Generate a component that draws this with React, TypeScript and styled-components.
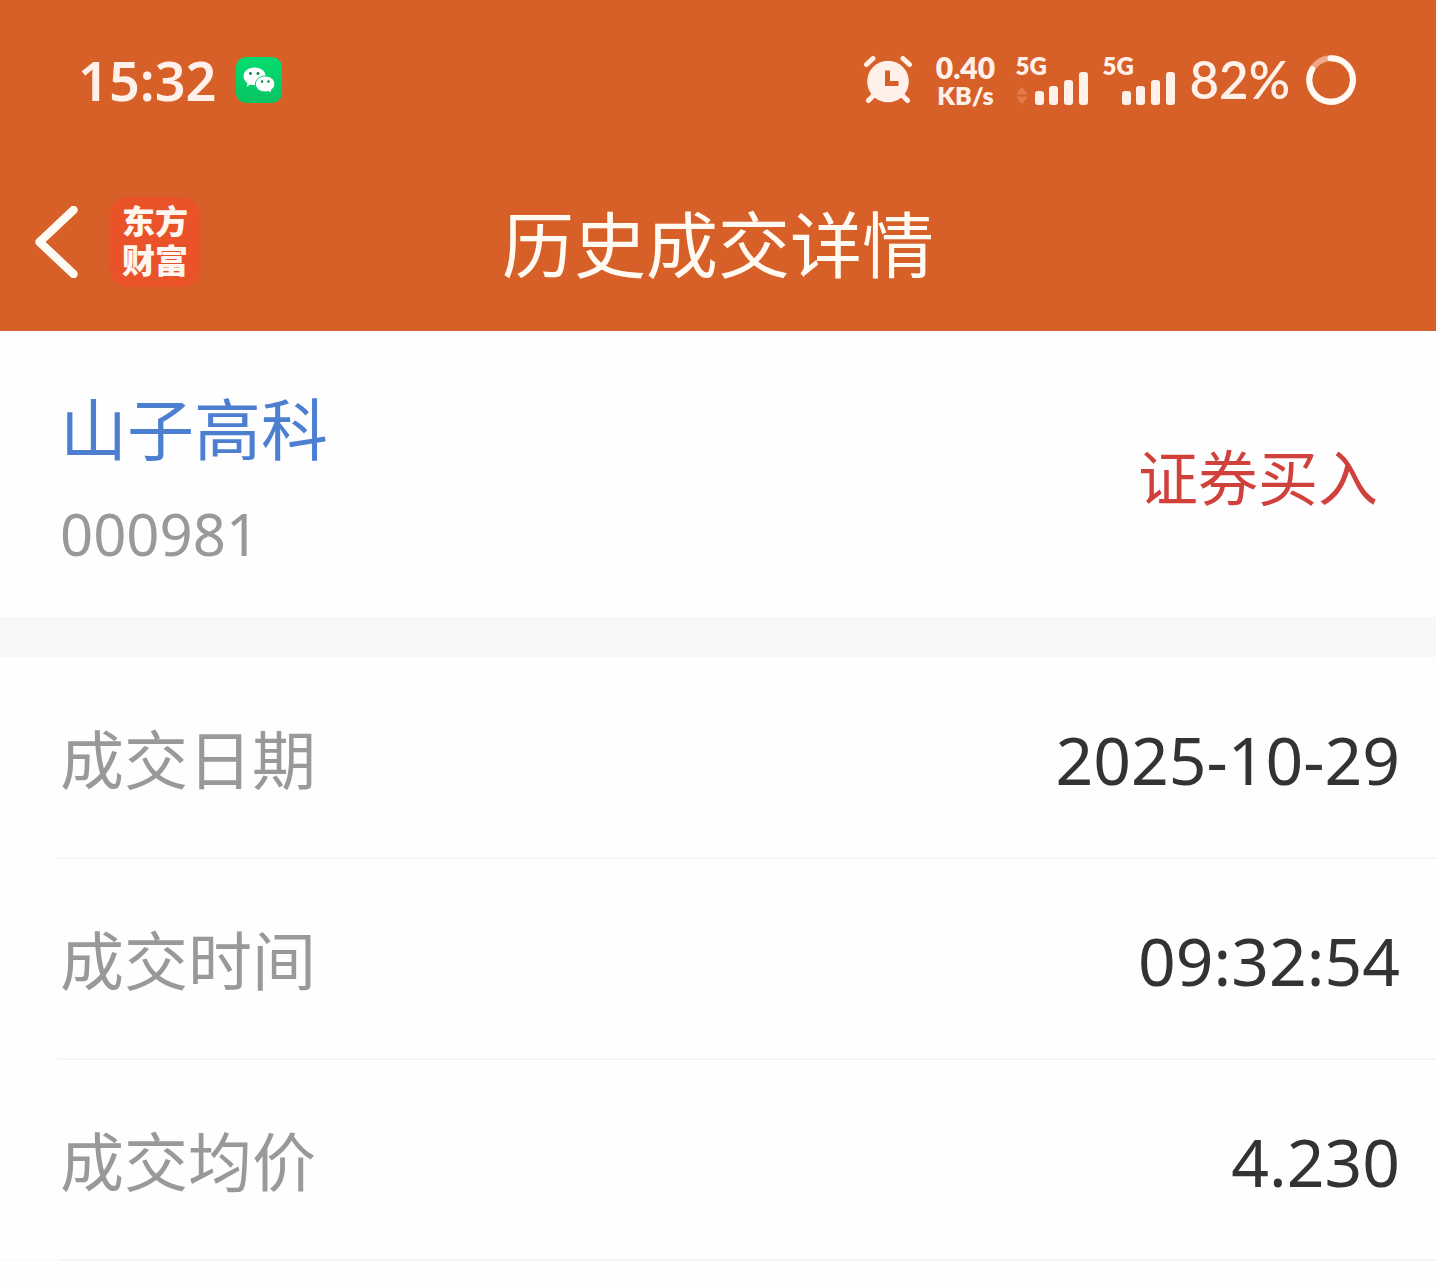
import React from "react";
import styled, { createGlobalStyle } from "styled-components";

const brand = "#d75f28";
const cream = "#fff1e9";
const numeric = `"Noto Sans", "Noto Sans CJK SC", sans-serif`;

const GlobalStyle = createGlobalStyle`
  * { box-sizing: border-box; }
  body {
    margin: 0;
    background: #fefefe;
    font-family: Lato, "Noto Sans CJK SC", sans-serif;
  }
`;

const Page = styled.div`
  display: flex;
  flex-direction: column;
  min-height: 100vh;
`;

const Header = styled.header`
  background: ${brand};
  color: ${cream};
`;

const StatusBar = styled.div`
  display: flex;
  align-items: center;
  justify-content: space-between;
  height: 160px;
  padding: 0 80px 0 78px;
`;

const StatusGroup = styled.div<{ $gap: number }>`
  display: flex;
  align-items: center;
  gap: ${(p) => p.$gap}px;
`;

const Clock = styled.time`
  font-family: ${numeric};
  font-size: 54px;
  line-height: 64px;
  font-weight: 600;
`;

const Speed = styled.div`
  display: flex;
  flex-direction: column;
  align-items: center;
  width: 64px;
  margin: 0 6px 0 8px;
  padding-top: 2px;
  font-weight: 800;
`;

const SpeedLine = styled.span<{ $size: number }>`
  font-size: ${(p) => p.$size}px;
  line-height: 28px;
`;

const Signal = styled.div`
  display: flex;
  flex-direction: column;
  width: 75px;
  padding-top: 1px;
  font-size: 24px;
  line-height: 20px;
  font-weight: 800;
`;

const SignalBars = styled.svg`
  display: block;
  width: 75px;
  height: 36px;
  margin-top: -7px;
`;

const Battery = styled.span`
  margin-right: 4px;
  font-size: 51px;
  line-height: 64px;
  font-weight: 600;
`;

const NavBar = styled.nav`
  display: grid;
  grid-template-columns: 1fr auto 1fr;
  align-items: center;
  height: 171px;
  padding: 0 34px 8px;
`;

const NavLeft = styled.div`
  display: flex;
  align-items: center;
  gap: 32px;
`;

const BackButton = styled.button`
  display: flex;
  padding: 0;
  border: 0;
  background: none;
  cursor: pointer;
`;

const AppLogo = styled.a`
  width: 90px;
  height: 90px;
  padding: 4px 12px;
  border-radius: 18px;
  background: #ea5329;
  color: #fff6f0;
  font-family: "Noto Sans CJK SC", sans-serif;
  font-size: 33px;
  line-height: 39px;
  font-weight: 900;
  text-decoration: none;
`;

const Title = styled.h1`
  margin: 0;
  padding-top: 4px;
  font-size: 72px;
  line-height: 88px;
  font-weight: 400;
  color: #fffaf2;
`;

const Summary = styled.section`
  display: flex;
  align-items: center;
  justify-content: space-between;
  padding: 46px 58px 34px 60px;
`;

const StockName = styled.a`
  display: block;
  font-size: 67px;
  line-height: 104px;
  color: #4c7fd0;
  text-decoration: none;
`;

const StockCode = styled.div`
  margin-top: 4px;
  font-family: ${numeric};
  font-size: 58px;
  line-height: 98px;
  color: #999;
`;

const TradeType = styled.div`
  padding-bottom: 4px;
  font-size: 60px;
  line-height: 88px;
  color: #d0413b;
`;

const Divider = styled.div`
  height: 40px;
  background: #f6f7f9;
`;

const Details = styled.dl`
  margin: 0;
  padding-top: 1px;
`;

const DetailRow = styled.div`
  display: flex;
  align-items: center;
  justify-content: space-between;
  height: 201px;
  padding: 4px 36px 0 60px;
  border-bottom: 2px solid;
  border-image: linear-gradient(to right, #fbfbfb 60px, #f5f5f5 60px) 1;
`;

const Label = styled.dt`
  font-size: 64px;
  line-height: 96px;
  color: #999;
`;

const Value = styled.dd`
  margin: 0;
  padding-bottom: 2px;
  font-family: ${numeric};
  font-size: 66px;
  line-height: 96px;
  color: #333;
`;

const rows = [
  { label: "成交日期", value: "2025-10-29" },
  { label: "成交时间", value: "09:32:54" },
  { label: "成交均价", value: "4.230" },
];

function WeChatIcon() {
  return (
    <svg width="46" height="46" viewBox="0 0 46 46" aria-hidden="true">
      <defs>
        <linearGradient id="wechat" x1="0" y1="0" x2="0" y2="1">
          <stop offset="0" stopColor="#04dc70" />
          <stop offset="1" stopColor="#08c463" />
        </linearGradient>
      </defs>
      <rect width="46" height="46" rx="10" fill="url(#wechat)" />
      <path d="M18.500 10.500C12.500 10.500 7.500 14.300 7.500 19.300c0 2.800 1.500 5.200 4 6.800l-1 3.600 4-2.200c1.300.4 2.600.6 4 .6 6.200 0 11.200-3.900 11.200-8.800s-5-8.800-11.200-8.800z" fill="#fff" />
      <path d="M29.200 19c-5.400 0-9.800 3.500-9.800 8s4.400 8 9.800 8c1.200 0 2.300-.2 3.400-.5l3.200 1.700-.8-2.900c2.300-1.500 3.800-3.700 3.800-6.300 0-4.500-4.300-8-9.600-8z" fill="#fff" stroke="#07cc67" strokeWidth="1" />
      <g fill="#087f43">
        <circle cx="14.500" cy="16.500" r="1.400" />
        <circle cx="22" cy="16.500" r="1.400" />
        <circle cx="26" cy="24.500" r="1.200" />
        <circle cx="32.500" cy="24.500" r="1.200" />
      </g>
    </svg>
  );
}

function AlarmIcon() {
  return (
    <svg width="50" height="50" viewBox="0 0 50 50" aria-label="闹钟" role="img">
      <g stroke={cream} strokeWidth="5" strokeLinecap="round">
        <path d="M3.500 9.500L10 3.500M40 3.500L46.500 9.500M11 40L5.500 45.500M39 40L44.500 45.500" />
      </g>
      <circle cx="25" cy="26.500" r="20.800" fill={cream} />
      <path d="M24.500 18V28.500H33" fill="none" stroke={brand} strokeWidth="5" strokeLinecap="square" />
    </svg>
  );
}

function SignalMeter({ arrows = false }: { arrows?: boolean }) {
  return (
    <Signal>
      <span>5G</span>
      <SignalBars viewBox="0 0 75 36" aria-hidden="true">
        {arrows && <path d="M1 25.500L7 17.500L13 25.500ZM1 27.500L7 35.500L13 27.500Z" fill="#e5794a" />}
        <g fill={cream}>
          <rect x="20" y="22" width="9" height="14" rx="3" />
          <rect x="34" y="17" width="9" height="19" rx="3" />
          <rect x="49" y="11" width="9" height="25" rx="3" />
          <rect x="64" y="3" width="9" height="33" rx="3" />
        </g>
      </SignalBars>
    </Signal>
  );
}

function BatteryRing() {
  return (
    <svg width="50" height="50" viewBox="0 0 50 50" aria-hidden="true">
      <circle cx="25" cy="25" r="21.800" fill="none" stroke="#f0a789" strokeWidth="6" />
      <path d="M24.500 3.200A21.800 21.800 0 1 1 6.200 14.200" fill="none" stroke="#fffaf2" strokeWidth="6" strokeLinecap="round" />
    </svg>
  );
}

export default function App() {
  return (
    <Page>
      <GlobalStyle />
      <Header>
        <StatusBar>
          <StatusGroup $gap={20}>
            <Clock>15:32</Clock>
            <WeChatIcon />
          </StatusGroup>
          <StatusGroup $gap={12}>
            <AlarmIcon />
            <Speed>
              <SpeedLine $size={30}>0.40</SpeedLine>
              <SpeedLine $size={25}>KB/s</SpeedLine>
            </Speed>
            <SignalMeter arrows />
            <SignalMeter />
            <Battery>82%</Battery>
            <BatteryRing />
          </StatusGroup>
        </StatusBar>
        <NavBar>
          <NavLeft>
            <BackButton type="button" aria-label="返回">
              <svg width="44" height="72" viewBox="0 0 44 72">
                <path d="M39.500 4L5.500 36L39.500 68" fill="none" stroke="#fffaf2" strokeWidth="8.500" strokeLinecap="round" strokeLinejoin="round" />
              </svg>
            </BackButton>
            <AppLogo href="#">东方财富</AppLogo>
          </NavLeft>
          <Title>历史成交详情</Title>
        </NavBar>
      </Header>
      <main>
        <Summary>
          <div>
            <StockName href="#">山子高科</StockName>
            <StockCode>000981</StockCode>
          </div>
          <TradeType>证券买入</TradeType>
        </Summary>
        <Divider />
        <Details>
          {rows.map((row) => (
            <DetailRow key={row.label}>
              <Label>{row.label}</Label>
              <Value>{row.value}</Value>
            </DetailRow>
          ))}
        </Details>
      </main>
    </Page>
  );
}
